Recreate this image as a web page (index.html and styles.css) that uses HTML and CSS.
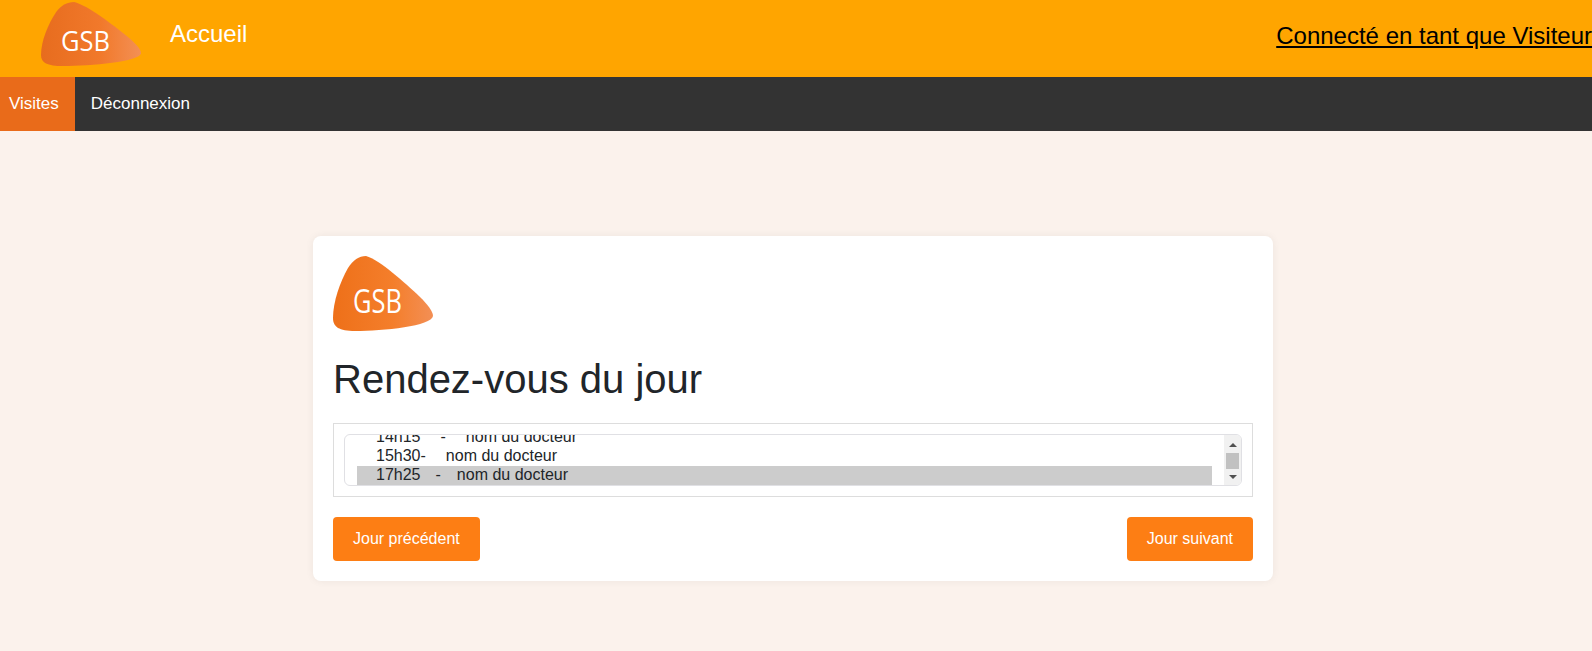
FILE: index.html
```html
<!DOCTYPE html>
<html lang="fr">
<head>
<meta charset="utf-8">
<title>Rendez-vous du jour</title>
<link rel="stylesheet" href="styles.css">
</head>
<body>
<svg class="defs" width="0" height="0" aria-hidden="true">
  <defs>
    <linearGradient id="gsb-grad" x1="0" y1="0" x2="1" y2="0">
      <stop offset="0" stop-color="#EE7019"/>
      <stop offset="0.6" stop-color="#F47E2B"/>
      <stop offset="1" stop-color="#F38F55"/>
    </linearGradient>
    <linearGradient id="gsb-grad-dim" x1="0" y1="0" x2="1" y2="0">
      <stop offset="0" stop-color="#E76C1E"/>
      <stop offset="0.6" stop-color="#F1792B"/>
      <stop offset="1" stop-color="#F39055"/>
    </linearGradient>
  </defs>
</svg>
<header class="topbar">
  <div class="brand">
    <svg class="logo-small" viewBox="0 0 100 75" preserveAspectRatio="none" role="img" aria-label="GSB">
      <path fill="url(#gsb-grad-dim)" d="M33 0C26 0 20 4 15 12C7 26 0 46 0 62C0 71 6 75 22 75C50 75 99 70 100 60C100 55 94 48 87 41C71 26 47 4 33 0Z"/>
      <text class="logo-text" x="20" y="57" textLength="49" lengthAdjust="spacingAndGlyphs">GSB</text>
    </svg>
    <a class="home" href="#">Accueil</a>
  </div>
  <a class="status" href="#">Connecté en tant que Visiteur</a>
</header>
<nav class="menu">
  <a class="menu-item active" href="#">Visites</a>
  <a class="menu-item" href="#">Déconnexion</a>
</nav>
<main class="page">
  <section class="card">
    <svg class="logo" viewBox="0 0 100 75" role="img" aria-label="GSB">
      <path fill="url(#gsb-grad)" d="M33 0C26 0 20 4 15 12C7 26 0 46 0 62C0 71 6 75 22 75C50 75 99 70 100 60C100 55 94 48 87 41C71 26 47 4 33 0Z"/>
      <text class="logo-text" x="20" y="57" textLength="49" lengthAdjust="spacingAndGlyphs">GSB</text>
    </svg>
    <h1 class="title">Rendez-vous du jour</h1>
    <div class="list-frame">
      <div class="listbox">
        <div class="options">
          <div class="option"><span class="time">14h15</span><span class="sep sep-a">-</span><span class="doc doc-a">nom du docteur</span></div>
          <div class="option"><span class="time">15h30-</span><span class="doc doc-b">nom du docteur</span></div>
          <div class="option selected"><span class="time">17h25</span><span class="sep sep-c">-</span><span class="doc doc-c">nom du docteur</span></div>
        </div>
        <div class="scrollbar">
          <span class="arrow arrow-up"></span>
          <span class="thumb"></span>
          <span class="arrow arrow-down"></span>
        </div>
      </div>
    </div>
    <div class="actions">
      <a class="btn" href="#">Jour précédent</a>
      <a class="btn" href="#">Jour suivant</a>
    </div>
  </section>
</main>
</body>
</html>
```
FILE: styles.css
```css
* { box-sizing: border-box; }
html, body { margin: 0; height: 100%; overflow: hidden; }
body {
  background: #FBF2EC;
  font-family: "Liberation Sans", Arial, sans-serif;
  font-size: 16px;
  color: #212529;
}
a { text-decoration: none; }
.defs { display: block; height: 0; }

.topbar {
  height: 77px;
  background: #FFA500;
  display: flex;
  justify-content: space-between;
  white-space: nowrap;
}
.brand { display: flex; align-items: flex-start; padding: 2px 0 0 41px; }
.logo-small { width: 100px; height: 64px; display: block; }
.home { color: #fff; font-size: 24px; line-height: 28px; margin: 18px 0 0 29px; }
.status {
  color: #000;
  font-size: 24px;
  line-height: 28px;
  margin-top: 22px;
  text-decoration: underline;
}
.logo-text { fill: #fff; font-family: "Open Sans", sans-serif; font-weight: 400; font-size: 33px; }

.menu { height: 54px; background: #333; display: flex; }
.menu-item { color: #fff; font-size: 17px; line-height: 54px; padding: 0 16px; }
.menu-item.active { background: #E96B1A; padding: 0 16px 0 9px; }

.page { padding: 105px 0 0 313px; }
.card {
  width: 960px;
  height: 345px;
  background: #fff;
  border-radius: 8px;
  padding: 20px;
  box-shadow: 0 0 8px rgba(0, 0, 0, 0.06);
}
.logo { display: block; width: 100px; height: 75px; }
.title { margin: 24px 0 20px; font-size: 40px; line-height: 48px; font-weight: 400; }
.list-frame { height: 74px; border: 1px solid #DDD; padding: 10px; }
.listbox {
  height: 52px;
  border: 1px solid #E0E0E4;
  border-radius: 6px;
  display: flex;
  overflow: hidden;
  background: #fff;
}
.options { flex: 1; padding: 0 12px 0 12px; margin-top: -7px; }
.option { height: 19px; line-height: 18px; padding-left: 19px; white-space: nowrap; display: flex; }
.option.selected { background: #CCC; }
.sep-a { margin-left: 20px; }
.doc-a { margin-left: 20px; }
.doc-b { margin-left: 20px; }
.sep-c { margin-left: 15px; }
.doc-c { margin-left: 16px; }
.scrollbar {
  width: 17px;
  background: #F1F1F1;
  display: flex;
  flex-direction: column;
  align-items: center;
  padding-top: 8px;
}
.arrow { width: 0; height: 0; border-left: 4px solid transparent; border-right: 4px solid transparent; }
.arrow-up { border-bottom: 4px solid #505050; }
.arrow-down { border-top: 4px solid #505050; margin-top: 6px; }
.thumb { width: 13px; height: 16px; background: #C1C1C1; margin-top: 6px; }

.actions { display: flex; justify-content: space-between; margin-top: 20px; }
.btn {
  display: block;
  height: 44px;
  line-height: 44px;
  padding: 0 20px;
  background: #FD7E14;
  color: #fff;
  border-radius: 4px;
}
```
